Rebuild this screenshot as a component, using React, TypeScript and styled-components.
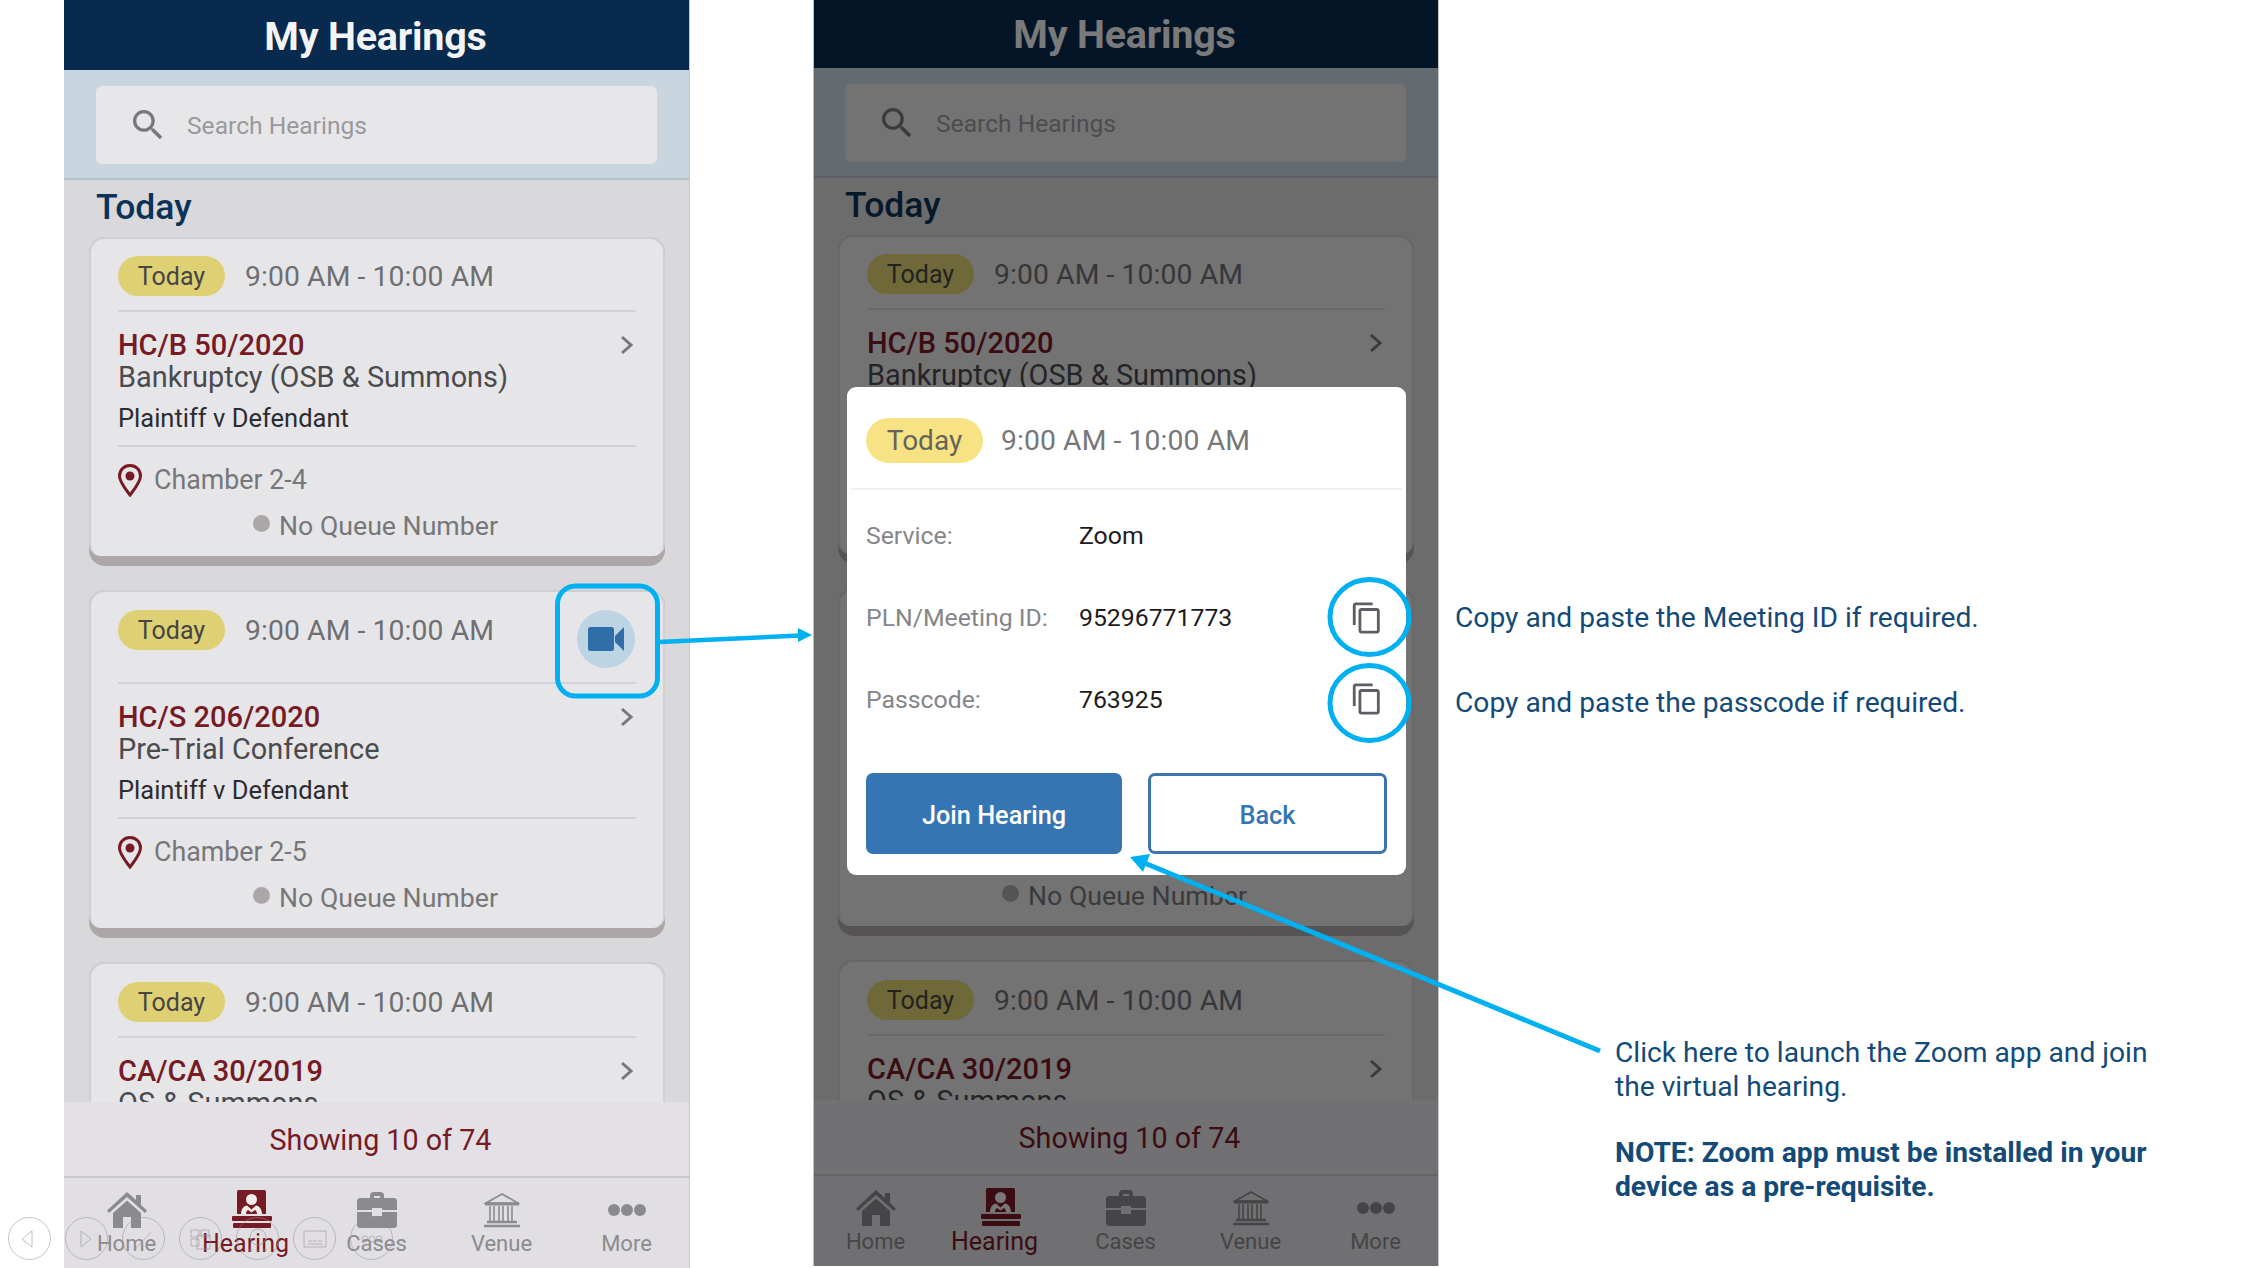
import React from "react";
import styled, { createGlobalStyle } from "styled-components";

const Global = createGlobalStyle`
  html, body { margin: 0; padding: 0; background: #fff; }
  body { font-family: Roboto, "Liberation Sans", sans-serif; width: 2256px; height: 1268px; overflow: hidden; }
  #root { width: 2256px; height: 1268px; }
`;

const Slide = styled.div`
  position: relative;
  display: flex;
  width: 2256px;
  height: 1268px;
  padding-left: 64px;
  box-sizing: border-box;
  overflow: hidden;
`;

const PhoneFrame = styled.section<{ $shift?: number; $ml?: number }>`
  position: relative;
  flex: none;
  display: flex;
  flex-direction: column;
  width: 625px;
  height: 1268px;
  margin-top: ${(p) => p.$shift ?? 0}px;
  margin-left: ${(p) => p.$ml ?? 0}px;
  background: #d9d9db;
  box-shadow: 1px 0 0 #c8c8ca;
  overflow: hidden;
`;

const Header = styled.header`
  flex: none;
  height: 70px;
  background: #072a4e;
  color: #f4f4f6;
  font-size: 39.5px;
  font-weight: 700;
  line-height: 74px;
  text-align: center;
  letter-spacing: -0.2px;
  padding-right: 2px;
`;

const SearchBand = styled.div`
  flex: none;
  height: 110px;
  box-sizing: border-box;
  padding: 16px 32px 0;
  background: #c9d6e0;
  border-bottom: 2px solid #b6c3ce;
`;

const SearchBox = styled.div`
  display: flex;
  align-items: center;
  height: 78px;
  padding-left: 37px;
  gap: 23px;
  background: #e7e7e9;
  border-radius: 6px;
  color: #99999c;
  font-size: 24.6px;
`;

const ListArea = styled.div`
  flex: 1;
  min-height: 0;
  overflow: hidden;
  padding: 5px 24px 0 25px;
`;

const SectionTitle = styled.h2`
  margin: 0 0 8px 7px;
  color: #0b3257;
  font-size: 35.5px;
  font-weight: 500;
  line-height: 44px;
`;

const CardFace = styled.div`
  box-sizing: border-box;
  background: #e6e6e9;
  border: 2px solid #d0d0d2;
  border-bottom: 0;
  border-radius: 16px 16px 12px 12px;
  padding: 17px 27px 12px;
`;

const Card = styled.article`
  background: #aca6a9;
  border-radius: 16px;
  padding-bottom: 10px;
  margin-bottom: 24px;

  & + & ${CardFace} {
    padding-top: 18px;
  }
`;

const TimeRow = styled.div`
  display: flex;
  align-items: flex-start;
  justify-content: space-between;
`;

const TimeGroup = styled.div`
  display: flex;
  align-items: center;
  gap: 20px;
`;

const Pill = styled.span`
  display: inline-block;
  width: 107px;
  height: 40px;
  line-height: 41px;
  text-align: center;
  border-radius: 20px;
  background: #dfd173;
  color: #454545;
  font-size: 25px;
`;

const TimeText = styled.span`
  color: #6f6f72;
  font-size: 28.3px;
  letter-spacing: 0.1px;
`;

const VideoButton = styled.div`
  display: flex;
  align-items: center;
  justify-content: center;
  width: 58px;
  height: 58px;
  margin-right: 1px;
  border-radius: 50%;
  background: #bdd4e5;
`;

const Rule = styled.hr<{ $space: number }>`
  margin: ${(p) => p.$space}px 0 0;
  border: 0;
  height: 2px;
  background: #d2d2d4;
`;

const CaseRow = styled.div`
  display: flex;
  align-items: center;
  justify-content: space-between;
  margin-top: 16px;
  height: 33px;
`;

const CaseNo = styled.span`
  color: #761a24;
  font-size: 29px;
  font-weight: 500;
`;

const CaseName = styled.div`
  color: #4b4b4e;
  font-size: 28.9px;
  line-height: 33px;
`;

const Parties = styled.div`
  margin-top: 9px;
  color: #2c2c30;
  font-size: 25.5px;
  line-height: 30px;
`;

const VenueRow = styled.div`
  display: flex;
  align-items: center;
  gap: 12px;
  margin-top: 15px;
  height: 36px;
  color: #77777a;
  font-size: 26.8px;
`;

const QueueRow = styled.div`
  display: flex;
  align-items: center;
  justify-content: center;
  gap: 9px;
  margin-top: 10px;
  height: 36px;
  color: #77777a;
  font-size: 26.7px;
  padding-right: 3px;
`;

const QueueDot = styled.i`
  width: 17px;
  height: 17px;
  margin-top: -6px;
  border-radius: 50%;
  background: #aca6a9;
`;

const Showing = styled.div`
  flex: none;
  height: 74px;
  padding-left: 8px;
  background: #e3e1e5;
  color: #761a24;
  font-size: 28.7px;
  line-height: 76px;
  text-align: center;
`;

const NavBar = styled.nav`
  flex: none;
  height: 92px;
  box-sizing: border-box;
  display: grid;
  grid-template-columns: repeat(5, 1fr);
  background: #e1dfe3;
  border-top: 2px solid #c8c8ca;
`;

const NavItem = styled.div<{ $active?: boolean }>`
  display: flex;
  flex-direction: column;
  align-items: center;
  color: ${(p) => (p.$active ? "#761a24" : "#8b8b8e")};
  font-size: ${(p) => (p.$active ? 25 : 22)}px;
`;

const NavIconBox = styled.div`
  display: flex;
  align-items: flex-end;
  justify-content: center;
  height: 50px;
`;

const NavLabel = styled.span<{ $active?: boolean }>`
  line-height: 32px;
  margin-right: ${(p) => (p.$active ? 12 : 0)}px;
`;

const Scrim = styled.div`
  position: absolute;
  inset: 0;
  background: rgba(0, 0, 0, 0.5);
  box-shadow: inset 1px 0 0 #bdbdbd;
`;

const Modal = styled.div`
  position: absolute;
  left: 34px;
  top: 389px;
  width: 559px;
  height: 488px;
  background: #fff;
  border-radius: 9px;
`;

const ModalHead = styled.div`
  display: flex;
  align-items: center;
  gap: 18px;
  height: 101px;
  padding: 5px 0 0 19px;
  box-sizing: border-box;
`;

const ModalPill = styled(Pill)`
  width: 117px;
  height: 45px;
  line-height: 46px;
  border-radius: 23px;
  background: #f7e384;
  color: #66645a;
  font-size: 28px;
`;

const ModalTime = styled(TimeText)`
  color: #77777a;
`;

const ModalRule = styled.hr`
  margin: 0 4px;
  border: 0;
  height: 2px;
  background: #f0f0f0;
`;

const InfoRows = styled.div`
  padding: 5px 22px 0 19px;
`;

const InfoRow = styled.div`
  display: grid;
  grid-template-columns: 213px 1fr auto;
  align-items: center;
  height: 81.7px;
  font-size: 24.8px;
`;

const InfoLabel = styled.span`
  color: #85858a;
`;

const InfoValue = styled.span`
  color: #1c1c1c;
`;

const ButtonRow = styled.div`
  display: flex;
  gap: 26px;
  padding: 33px 19px 0;
`;

const JoinButton = styled.div`
  display: flex;
  align-items: center;
  justify-content: center;
  box-sizing: border-box;
  width: 256px;
  height: 81px;
  padding-top: 3px;
  border-radius: 7px;
  background: #3675b3;
  color: #fff;
  font-size: 25.3px;
  font-weight: 500;
`;

const BackButton = styled(JoinButton)`
  width: 239px;
  background: #fff;
  border: 3px solid #3d74ae;
  color: #3675b3;
`;

const Notes = styled.aside`
  flex: none;
  margin-left: 17px;
  padding-top: 601px;
  color: #134a78;
  font-size: 28.2px;
  line-height: 34px;
`;

const Note = styled.p<{ $top?: number; $indent?: number; $bold?: boolean }>`
  margin: ${(p) => p.$top ?? 0}px 0 0 ${(p) => p.$indent ?? 0}px;
  font-weight: ${(p) => (p.$bold ? 700 : 400)};
  white-space: pre-line;
`;

const Callouts = styled.svg`
  position: absolute;
  inset: 0;
  pointer-events: none;
`;

const SlideControls = styled.div`
  position: absolute;
  left: 8px;
  top: 1217px;
  display: flex;
  gap: 14px;
`;

const ControlButton = styled.div`
  display: flex;
  align-items: center;
  justify-content: center;
  width: 43px;
  height: 43px;
  box-sizing: border-box;
  border: 1px solid rgba(150, 150, 150, 0.55);
  border-radius: 50%;
`;

const GRAY = "#8b8b8e";
const RED = "#761a24";

const SearchIcon = () => (
  <svg width="31" height="31" viewBox="3 3 18.5 18.5" fill="#77777a">
    <path d="M15.5 14h-.79l-.28-.27A6.47 6.47 0 0 0 16 9.5 6.500 6.500 0 1 0 9.5 16c1.61 0 3.09-.59 4.23-1.57l.27.28v.79l5 4.99L20.49 19l-4.99-5zm-6 0C7.01 14 5 11.99 5 9.5S7.01 5 9.5 5 14 7.01 14 9.5 11.99 14 9.5 14z" />
  </svg>
);

const Chevron = () => (
  <svg width="16" height="20" viewBox="0 0 16 20" fill="none" stroke="#77777a" strokeWidth="3">
    <path d="M2 2l9 8-9 8" />
  </svg>
);

const PinIcon = () => (
  <svg width="24" height="33" viewBox="0 0 24 33">
    <path d="M12 1.500C6 1.500 1.500 6 1.500 12c0 6 6 13 10.500 19 4.500-6 10.500-13 10.500-19C22.500 6 18 1.500 12 1.500z" fill="none" stroke={RED} strokeWidth="3" />
    <circle cx="12" cy="12" r="4.500" fill={RED} />
  </svg>
);

const VideoIcon = () => (
  <svg width="36" height="24" viewBox="0 0 36 24" fill="#2f6ea9">
    <rect x="0" y="0" width="26" height="24" rx="2.500" />
    <path d="M27 9l9-9v24l-9-9z" />
  </svg>
);

const CopyIcon = () => (
  <svg width="34" height="34" viewBox="0 0 24 24" fill="#5c6066">
    <path d="M16 1H4c-1.100 0-2 .9-2 2v14h2V3h12V1zm3 4H8c-1.100 0-2 .9-2 2v14c0 1.100.9 2 2 2h11c1.100 0 2-.9 2-2V7c0-1.100-.9-2-2-2zm0 16H8V7h11v14z" />
  </svg>
);

const HomeIcon = () => (
  <svg width="40" height="36" viewBox="0 0 40 36" fill={GRAY}>
    <path d="M20 0l9 8V3h5v10l6 5.500-2 2.500L20 5 2 21l-2-2.500z" />
    <path d="M6 21L20 8.500 34 21v15H24V25h-8v11H6z" />
  </svg>
);

const HearingIcon = () => (
  <svg width="40" height="38" viewBox="0 0 40 38" fill={RED}>
    <path d="M6.500 0h26A1.500 1.500 0 0 1 34 1.500V24H5V1.500A1.500 1.500 0 0 1 6.500 0z" />
    <circle cx="19.500" cy="9.500" r="5.500" fill="#f2eeee" />
    <path d="M9 24c0-5 3-8 6-8.500l4.500 4 4.500-4c3 .5 6 3.500 6 8.500z" fill="#f2eeee" />
    <path d="M14 24c0-2 1-3.500 2-4l3.500 2.500L23 20c1 .5 2 2 2 4z" fill={RED} />
    <rect x="0" y="26" width="40" height="5" rx="1" />
    <rect x="1" y="33" width="38" height="5" rx="1" />
  </svg>
);

const CasesIcon = () => (
  <svg width="40" height="36" viewBox="0 0 40 36" fill={GRAY}>
    <path d="M13 6V3.500C13 1.500 14.500 0 16.500 0h7C25.500 0 27 1.500 27 3.500V6h-4V4h-6v2z" />
    <path d="M3 6h34c1.700 0 3 1.300 3 3v9H25v-2h-10v2H0V9c0-1.700 1.300-3 3-3z" />
    <path d="M0 20h15v4h10v-4h15v13c0 1.700-1.300 3-3 3H3c-1.700 0-3-1.300-3-3z" />
  </svg>
);

const VenueIcon = () => (
  <svg width="40" height="36" viewBox="0 0 40 36" fill="none" stroke={GRAY} strokeWidth="1.600">
    <path d="M4 11L20 2l16 9z" />
    <path d="M3 12h34" strokeWidth="3" />
    <path d="M8 14v15M12 14v15M17 14v15M21 14v15M26 14v15M30 14v15" />
    <path d="M5 30h30M2 34h36" strokeWidth="2.500" />
  </svg>
);

const MoreIcon = () => (
  <svg width="40" height="36" viewBox="0 0 40 36" fill={GRAY}>
    <circle cx="7" cy="18" r="6" />
    <circle cx="20" cy="18" r="6" />
    <circle cx="33" cy="18" r="6" />
  </svg>
);

type CaseInfo = { no: string; name: string; room: string; video?: boolean };

const cases: CaseInfo[] = [
  { no: "HC/B 50/2020", name: "Bankruptcy (OSB & Summons)", room: "Chamber 2-4" },
  { no: "HC/S 206/2020", name: "Pre-Trial Conference", room: "Chamber 2-5", video: true },
  { no: "CA/CA 30/2019", name: "OS & Summons", room: "Chamber 2-6" },
];

const HearingCard = ({ info }: { info: CaseInfo }) => (
  <Card>
    <CardFace>
      <TimeRow>
        <TimeGroup>
          <Pill>Today</Pill>
          <TimeText>9:00 AM - 10:00 AM</TimeText>
        </TimeGroup>
        {info.video && (
          <VideoButton>
            <VideoIcon />
          </VideoButton>
        )}
      </TimeRow>
      <Rule $space={14} />
      <CaseRow>
        <CaseNo>{info.no}</CaseNo>
        <Chevron />
      </CaseRow>
      <CaseName>{info.name}</CaseName>
      <Parties>Plaintiff v Defendant</Parties>
      <Rule $space={12} />
      <VenueRow>
        <PinIcon />
        {info.room}
      </VenueRow>
      <QueueRow>
        <QueueDot />
        No Queue Number
      </QueueRow>
    </CardFace>
  </Card>
);

const tabs = [
  { label: "Home", icon: <HomeIcon /> },
  { label: "Hearing", icon: <HearingIcon />, active: true },
  { label: "Cases", icon: <CasesIcon /> },
  { label: "Venue", icon: <VenueIcon /> },
  { label: "More", icon: <MoreIcon /> },
];

const Phone = ({ shift, ml, children }: { shift?: number; ml?: number; children?: React.ReactNode }) => (
  <PhoneFrame $shift={shift} $ml={ml}>
    <Header>My Hearings</Header>
    <SearchBand>
      <SearchBox>
        <SearchIcon />
        Search Hearings
      </SearchBox>
    </SearchBand>
    <ListArea>
      <SectionTitle>Today</SectionTitle>
      {cases.map((c) => (
        <HearingCard key={c.no} info={c} />
      ))}
    </ListArea>
    <Showing>Showing 10 of 74</Showing>
    <NavBar>
      {tabs.map((t) => (
        <NavItem key={t.label} $active={t.active}>
          <NavIconBox>{t.icon}</NavIconBox>
          <NavLabel $active={t.active}>{t.label}</NavLabel>
        </NavItem>
      ))}
    </NavBar>
    {children}
  </PhoneFrame>
);

const controls = [
  <path key="a" d="M15 5L5 13l10 8z" />,
  <path key="b" d="M7 5l10 8-10 8z" />,
  <path key="c" d="M6 21L20 6M6 21l-1 2" />,
  <path key="d" d="M3 4h8v7H3zM13 4h8v7h-8zM3 13h8v7H3zM9 9h13v14H9z" />,
  <g key="e"><circle cx="13" cy="11" r="8" /><path d="M4 24h4M11 24h4M18 24h4" /></g>,
  <path key="f" d="M2 5h22v16H2zM6 15h4M11 15h4M16 15h4M6 18h14" />,
  <g key="g"><circle cx="6" cy="13" r="3" /><circle cx="13" cy="13" r="3" /><circle cx="20" cy="13" r="3" /></g>,
];

export default function App() {
  return (
    <>
      <Global />
      <Slide>
        <Phone />
        <Phone shift={-2} ml={124}>
          <Scrim />
          <Modal>
            <ModalHead>
              <ModalPill>Today</ModalPill>
              <ModalTime>9:00 AM - 10:00 AM</ModalTime>
            </ModalHead>
            <ModalRule />
            <InfoRows>
              <InfoRow>
                <InfoLabel>Service:</InfoLabel>
                <InfoValue>Zoom</InfoValue>
              </InfoRow>
              <InfoRow>
                <InfoLabel>PLN/Meeting ID:</InfoLabel>
                <InfoValue>95296771773</InfoValue>
                <CopyIcon />
              </InfoRow>
              <InfoRow>
                <InfoLabel>Passcode:</InfoLabel>
                <InfoValue>763925</InfoValue>
                <CopyIcon />
              </InfoRow>
            </InfoRows>
            <ButtonRow>
              <JoinButton>Join Hearing</JoinButton>
              <BackButton>Back</BackButton>
            </ButtonRow>
          </Modal>
        </Phone>
        <Notes>
          <Note>Copy and paste the Meeting ID if required.</Note>
          <Note $top={51}>Copy and paste the passcode if required.</Note>
          <Note $top={316} $indent={160}>{"Click here to launch the Zoom app and join\nthe virtual hearing."}</Note>
          <Note $top={32} $indent={160} $bold>{"NOTE: Zoom app must be installed in your\ndevice as a pre-requisite."}</Note>
        </Notes>
        <Callouts width="2256" height="1268" viewBox="0 0 2256 1268" fill="none" stroke="#00b0f0">
          <rect x="557.500" y="586" width="100" height="110" rx="18" strokeWidth="5" />
          <path d="M659 642L800 635.500" strokeWidth="4.500" />
          <path d="M812 635L798 628v14z" fill="#00b0f0" strokeWidth="0" />
          <ellipse cx="1369.500" cy="617" rx="39.500" ry="37.500" strokeWidth="5" />
          <ellipse cx="1369.500" cy="703" rx="39.500" ry="37.500" strokeWidth="5" />
          <path d="M1600 1051L1142 862" strokeWidth="5" />
          <path d="M1130 857L1150 854 1143 872z" fill="#00b0f0" strokeWidth="0" />
        </Callouts>
        <SlideControls>
          {controls.map((g, i) => (
            <ControlButton key={i}>
              <svg width="26" height="26" viewBox="0 0 26 26" fill="none" stroke="rgba(150,150,150,0.6)" strokeWidth="1">
                {g}
              </svg>
            </ControlButton>
          ))}
        </SlideControls>
      </Slide>
    </>
  );
}
